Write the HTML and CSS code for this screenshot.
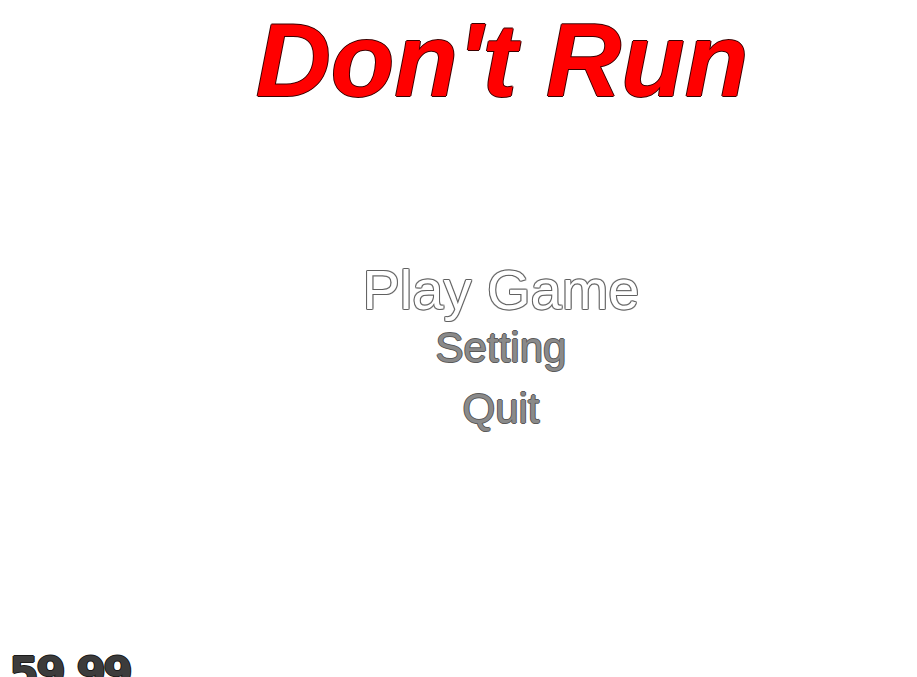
FILE: index.html
```html
<!DOCTYPE html>
<html lang="en">
<head>
<meta charset="utf-8">
<title>Don't Run</title>
<link rel="stylesheet" href="styles.css">
</head>
<body>
<main class="screen">
  <h1 class="title">Don't Run</h1>
  <nav class="menu">
    <div class="item item-active">Play Game</div>
    <div class="item item-setting">Setting</div>
    <div class="item item-quit">Quit</div>
  </nav>
  <div class="fps">59.99</div>
</main>
</body>
</html>
```
FILE: styles.css
```css
html, body {
  margin: 0;
  padding: 0;
  background: #ffffff;
}
.screen {
  width: 917px;
  height: 677px;
  overflow: hidden;
  display: flex;
  flex-direction: column;
  font-family: "Liberation Sans", Arial, sans-serif;
}
.title {
  margin: 8px 0 0 87px;
  text-align: center;
  font-size: 104px;
  line-height: 104px;
  font-weight: bold;
  font-style: italic;
  color: #ff0000;
  text-shadow: 1px 0 0 #3a0000, -1px 0 0 #3a0000, 0 1px 0 #3a0000, 0 -1px 0 #3a0000;
}
.menu {
  margin: 148px 0 0 85px;
  display: flex;
  flex-direction: column;
  align-items: center;
}
.item {
  font-weight: normal;
}
.item-active {
  font-size: 56px;
  line-height: 60px;
  color: #ffffff;
  text-shadow: 1px 0 0 #606060, -1px 0 0 #606060, 0 1px 0 #606060, 0 -1px 0 #606060,
    1px 1px 0 #a0a0a0, -1px -1px 0 #a0a0a0, 1px -1px 0 #a0a0a0, -1px 1px 0 #a0a0a0;
}
.item-setting,
.item-quit {
  font-size: 42px;
  color: #8a8a8a;
  text-shadow: 1px 0 0 #5a5a5a, -1px 0 0 #5a5a5a, 0 1px 0 #5a5a5a, 0 -1px 0 #5a5a5a;
}
.item-setting {
  line-height: 56px;
}
.item-quit {
  line-height: 60px;
  margin-top: 3px;
}
.fps {
  margin-top: auto;
  margin-left: 9px;
  margin-bottom: -17px;
  font-family: "DejaVu Sans", sans-serif;
  font-weight: bold;
  font-size: 43px;
  line-height: 43px;
  letter-spacing: -3px;
  color: #3c3c3c;
  text-shadow: 1px 0 0 #1a1a1a, -1px 0 0 #1a1a1a, 0 1px 0 #1a1a1a, 0 -1px 0 #1a1a1a;
}
```
